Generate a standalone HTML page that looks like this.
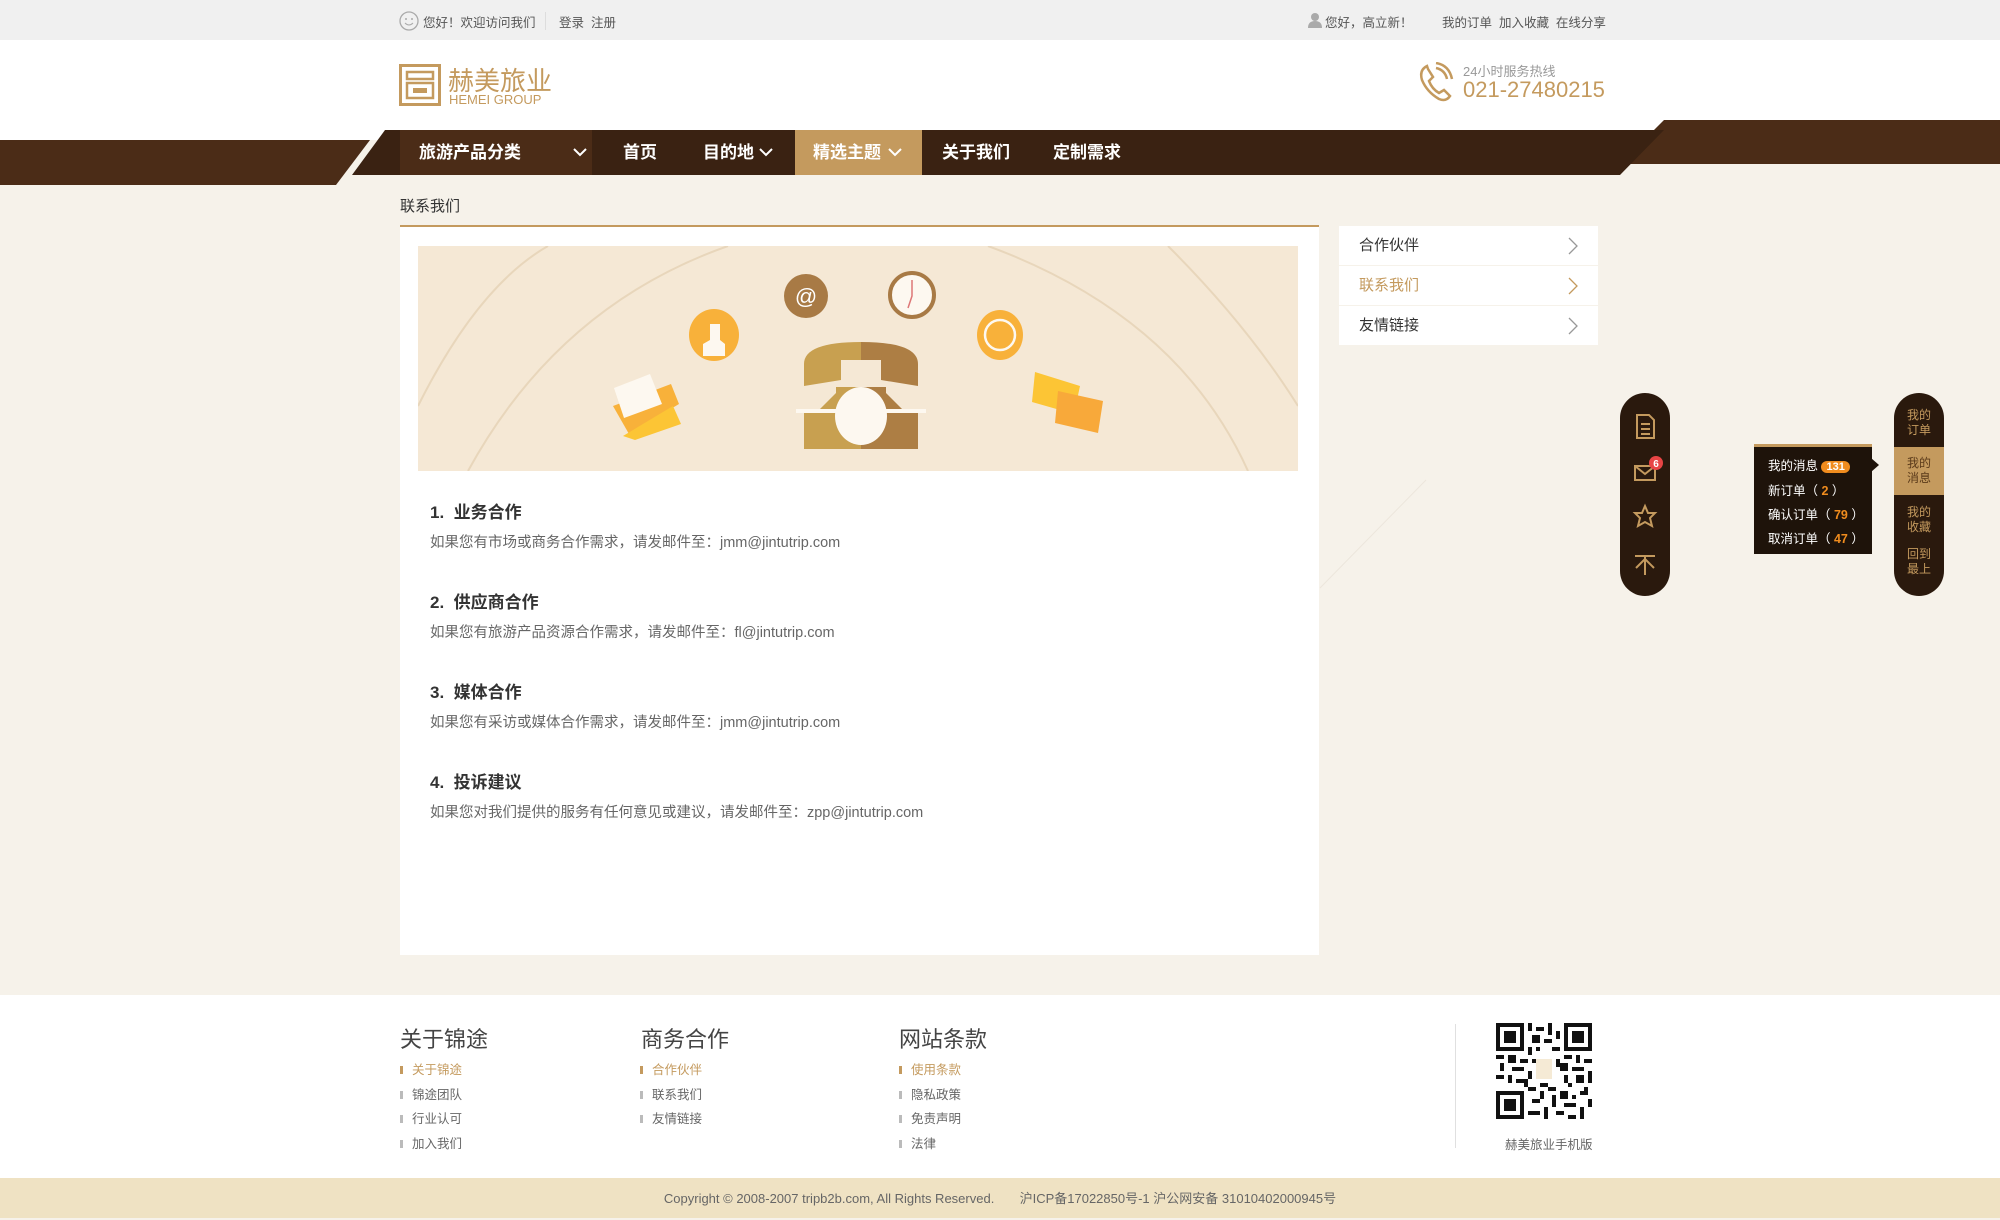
<!DOCTYPE html>
<html><head><meta charset="utf-8"><style>
*{margin:0;padding:0;box-sizing:border-box}
body{width:2000px;height:1218px;background:#f6f2ea;font-family:"Liberation Sans","Noto Sans CJK SC",sans-serif;color:#333;position:relative;overflow:hidden}
.abs{position:absolute}
.top{left:0;top:0;width:2000px;height:40px;background:#f0f0f0;font-size:12.5px;color:#555}
.hdr{left:0;top:40px;width:2000px;height:100px;background:#fff}
.nav a{position:absolute;top:0;height:45px;line-height:45px;color:#fff;font-size:17px;font-weight:bold}
.h3{font-size:17px;font-weight:bold;color:#333;left:430px}
.p{font-size:14.5px;color:#666;left:430px}
.side div{position:absolute;left:1339px;width:259px;height:39px;background:#fff;font-size:15px;line-height:39px;padding-left:20px;color:#333}
.fh{font-size:22px;color:#444;top:1022px}
.fl{font-size:12.5px;color:#666;line-height:24.5px;top:1058px}
.fl span{display:block;position:relative;padding-left:12px}
.fl span:before{content:"";position:absolute;left:0;top:8px;width:3px;height:8px;background:#bbb}
.fl span.on{color:#c49a5e}.fl span.on:before{background:#c49a5e}
</style></head><body>
<div class="abs top">
  <svg class="abs" style="left:399px;top:11px" width="20" height="20"><circle cx="10" cy="10" r="9" fill="none" stroke="#aaa" stroke-width="1.3"/><circle cx="7" cy="8" r="1" fill="#aaa"/><circle cx="13" cy="8" r="1" fill="#aaa"/><path d="M6 12q4 4 8 0" fill="none" stroke="#aaa"/></svg>
  <div class="abs" style="left:423px;top:12px">您好！欢迎访问我们</div>
  <div class="abs" style="left:545px;top:12px;width:1px;height:18px;background:#ddd"></div>
  <div class="abs" style="left:559px;top:12px">登录&nbsp; 注册</div>
  <svg class="abs" style="left:1308px;top:12px" width="14" height="16"><circle cx="7" cy="5" r="4" fill="#aaa"/><path d="M0 16q0-7 7-7q7 0 7 7z" fill="#aaa"/></svg>
  <div class="abs" style="left:1325px;top:12px">您好，高立新！</div>
  <div class="abs" style="left:1442px;top:12px">我的订单&nbsp; 加入收藏&nbsp; 在线分享</div>
</div>
<div class="abs hdr"></div>
<svg class="abs" style="left:399px;top:64px" width="42" height="42"><rect x="1.5" y="1.5" width="39" height="39" fill="none" stroke="#c49a5e" stroke-width="3"/><rect x="8" y="8" width="26" height="7" fill="none" stroke="#c49a5e" stroke-width="2.5"/><rect x="8" y="19" width="26" height="15" fill="none" stroke="#c49a5e" stroke-width="2.5"/><rect x="14" y="24" width="14" height="5" fill="#c49a5e"/></svg>
<div class="abs" style="left:448px;top:61px;font-size:26px;color:#c49a5e">赫美旅业</div>
<div class="abs" style="left:449px;top:92px;font-size:13px;color:#c49a5e">HEMEI GROUP</div>
<svg class="abs" style="left:1418px;top:62px" width="36" height="40" viewBox="0 0 36 40"><path d="M9 4q-8 4-5 14q5 12 17 19q7 3 11-3l-6-6-5 3q-7-4-10-12l4-4-5-8z" fill="none" stroke="#c49a5e" stroke-width="2.5"/><path d="M18 6q9 2 11 11M18 1q13 2 16 16" fill="none" stroke="#c49a5e" stroke-width="2.5"/></svg>
<div class="abs" style="left:1463px;top:61px;font-size:13px;color:#999">24小时服务热线</div>
<div class="abs" style="left:1463px;top:77px;font-size:22px;color:#c49a5e">021-27480215</div>
<svg class="abs" style="left:0;top:118px" width="2000" height="68"><polygon points="0,22 370,22 336,67 0,67" fill="#4b2c17"/><polygon points="1664,2 2000,2 2000,46 1620,46" fill="#4b2c17"/><polygon points="385,12 1664,12 1620,57 385,57" fill="#3a2212"/><polygon points="385,12 400,12 400,57 352,57" fill="#3a2212"/></svg>
<div class="abs nav" style="left:0;top:130px;width:2000px;height:45px">
  <div class="abs" style="left:400px;top:0;width:192px;height:45px;background:#4b2c17"></div>
  <a style="left:419px">旅游产品分类</a><svg class="abs" style="left:573px;top:18px" width="14" height="9"><path d="M1 1l6 6 6-6" fill="none" stroke="#fff" stroke-width="2"/></svg>
  <a style="left:623px">首页</a>
  <a style="left:703px">目的地</a><svg class="abs" style="left:759px;top:18px" width="14" height="9"><path d="M1 1l6 6 6-6" fill="none" stroke="#fff" stroke-width="2"/></svg>
  <div class="abs" style="left:795px;top:0;width:127px;height:45px;background:#c49a5e"></div>
  <a style="left:813px">精选主题</a><svg class="abs" style="left:888px;top:18px" width="14" height="9"><path d="M1 1l6 6 6-6" fill="none" stroke="#fff" stroke-width="2"/></svg>
  <a style="left:942px">关于我们</a>
  <a style="left:1053px">定制需求</a>
</div>
<div class="abs" style="left:400px;top:195px;font-size:15px;color:#333">联系我们</div>
<div class="abs" style="left:400px;top:225px;width:919px;height:730px;background:#fff;border-top:2px solid #c49a5e"></div>
<svg class="abs" style="left:418px;top:246px" width="880" height="225" viewBox="0 0 880 225">
 <rect width="880" height="225" fill="#f5e8d5"/>
 <g fill="none" stroke="#e8d6bb" stroke-width="2"><path d="M0 160Q60 40 130 0M50 225Q140 60 310 0M750 0Q830 80 880 160M570 0Q760 70 830 225"/></g>
 <circle cx="388" cy="50" r="22" fill="#a87a45"/><text x="388" y="58" font-size="22" fill="#fff" text-anchor="middle" font-family="Liberation Sans">@</text>
 <circle cx="494" cy="49" r="22" fill="#fdf8f0" stroke="#a87a45" stroke-width="4"/><path d="M494 34v16l-4 12" stroke="#d77" stroke-width="1.5" fill="none"/>
 <ellipse cx="296" cy="89" rx="25" ry="26" fill="#f8b13a"/><path d="M285 110h22v-12l-5-4v-16h-10v16l-7 4z" fill="#fdf8f0"/>
 <ellipse cx="582" cy="89" rx="23" ry="25" fill="#f8b13a"/><circle cx="582" cy="89" r="15" fill="none" stroke="#fdf8f0" stroke-width="2.5"/>
 <path d="M386 140v-22q0-22 57-22v18h-20v20z" fill="#c8a050"/><path d="M500 140v-22q0-22-57-22v18h20v20z" fill="#ad7e44"/>
 <path d="M398 167l20-20v-6h25v26z" fill="#c8a050"/><path d="M488 167l-20-20v-6h-25v26z" fill="#ad7e44"/>
 <rect x="386" y="165" width="57" height="38" fill="#c8a050"/><rect x="443" y="165" width="57" height="38" fill="#ad7e44"/>
 <rect x="378" y="163" width="130" height="4" fill="#fdf8f0"/>
 <ellipse cx="443" cy="170" rx="26" ry="29" fill="#fdf8f0"/>
 <path d="M195 160l58-22 8 20-50 30z" fill="#f8b13a"/><path d="M196 142l36-14 12 30-38 14z" fill="#fdf8f0"/><path d="M205 190l50-30 8 18-46 16z" fill="#fcc535"/>
 <path d="M617 126l45 14-6 28-42-12z" fill="#fcc535"/><path d="M640 145l45 10-5 32-43-10z" fill="#f8a93a"/>
</svg>
<div class="abs h3" style="top:498px">1.&nbsp; 业务合作</div>
<div class="abs p" style="top:531px">如果您有市场或商务合作需求，请发邮件至：jmm@jintutrip.com</div>
<div class="abs h3" style="top:588px">2.&nbsp; 供应商合作</div>
<div class="abs p" style="top:621px">如果您有旅游产品资源合作需求，请发邮件至：fl@jintutrip.com</div>
<div class="abs h3" style="top:678px">3.&nbsp; 媒体合作</div>
<div class="abs p" style="top:711px">如果您有采访或媒体合作需求，请发邮件至：jmm@jintutrip.com</div>
<div class="abs h3" style="top:768px">4.&nbsp; 投诉建议</div>
<div class="abs p" style="top:801px">如果您对我们提供的服务有任何意见或建议，请发邮件至：zpp@jintutrip.com</div>
<div class="side">
 <div style="top:226px">合作伙伴</div><div style="top:266px;color:#c49a5e">联系我们</div><div style="top:306px">友情链接</div>
</div>
<svg class="abs" style="left:1564px;top:232px" width="20" height="120" fill="none" stroke="#999" stroke-width="1.3"><path d="M5 6l8 8-8 8"/><path d="M5 46l8 8-8 8" stroke="#c49a5e"/><path d="M5 86l8 8-8 8"/></svg>
<svg class="abs" style="left:1318px;top:470px" width="110" height="120"><path d="M2 118L108 10" stroke="#ece6dc" stroke-width="1"/></svg>
<div class="abs" style="left:1620px;top:393px;width:50px;height:203px;background:#2a190d;border-radius:25px"></div>
<svg class="abs" style="left:1620px;top:393px" width="60" height="203" fill="none" stroke="#c49a5e" stroke-width="2"><path d="M17 22h12l5 5v18h-17z M21 31h9M21 36h9M21 41h9"/><rect x="15" y="73" width="20" height="14"/><path d="M15 73l10 8 10-8"/><circle cx="36" cy="70" r="7" fill="#e84545" stroke="none"/><text x="36" y="74" font-size="10" fill="#fff" stroke="none" text-anchor="middle" font-weight="bold">6</text><path d="M25 113l3 7h7l-5 5 2 8-7-4-7 4 2-8-5-5h7z"/><path d="M15 163h20M25 163v19M25 166l-9 9M25 166l9 9"/></svg>
<div class="abs" style="left:1894px;top:393px;width:50px;height:203px;background:#2a190d;border-radius:25px;overflow:hidden;color:#c49a5e;font-size:12px;line-height:15px;text-align:center">
 <div style="padding-top:15px;height:54px">我的<br>订单</div>
 <div style="background:#c49a5e;color:#5a3a1a;height:48px;padding-top:9px">我的<br>消息</div>
 <div style="padding-top:10px;height:48px">我的<br>收藏</div>
 <div style="padding-top:4px">回到<br>最上</div>
</div>
<div class="abs" style="left:1754px;top:444px;width:118px;height:110px;background:#1e130a;border-top:3px solid #c49a5e;color:#fff;font-size:12.5px;line-height:24px;padding:7px 0 0 14px">
 我的消息 <span style="background:#f08c1e;border-radius:8px;padding:0 5px;font-weight:bold;font-size:11px">131</span><br>新订单（ <b style="color:#f08c1e">2</b> ）<br>确认订单（ <b style="color:#f08c1e">79</b> ）<br>取消订单（ <b style="color:#f08c1e">47</b> ）
</div>
<svg class="abs" style="left:1871px;top:458px" width="10" height="14"><path d="M0 0l8 7-8 7z" fill="#1e130a"/></svg>
<div class="abs" style="left:0;top:995px;width:2000px;height:183px;background:#fff"></div>
<div class="abs fh" style="left:400px">关于锦途</div><div class="abs fh" style="left:641px">商务合作</div><div class="abs fh" style="left:899px">网站条款</div>
<div class="abs fl" style="left:400px"><span class="on">关于锦途</span><span>锦途团队</span><span>行业认可</span><span>加入我们</span></div>
<div class="abs fl" style="left:640px"><span class="on">合作伙伴</span><span>联系我们</span><span>友情链接</span></div>
<div class="abs fl" style="left:899px"><span class="on">使用条款</span><span>隐私政策</span><span>免责声明</span><span>法律</span></div>
<div class="abs" style="left:1455px;top:1024px;width:1px;height:124px;background:#e0e0e0"></div>
<svg class="abs" style="left:1496px;top:1023px" width="96" height="96" viewBox="0 0 24 24" shape-rendering="crispEdges">
 <rect width="24" height="24" fill="#fff"/>
 <g fill="#111"><path d="M0 0h7v7h-7zM17 0h7v7h-7zM0 17h7v7h-7z"/></g>
 <g fill="#fff"><path d="M1 1h5v5h-5zM18 1h5v5h-5zM1 18h5v5h-5z"/></g>
 <g fill="#111"><path d="M2 2h3v3h-3zM19 2h3v3h-3zM2 19h3v3h-3z"/>
 <path d="M8 0h1v2h-1zM10 1h2v1h-2zM13 0h1v3h-1zM15 2h1v2h-1zM9 3h2v2h-2zM12 4h2v1h-2zM8 6h1v2h-1zM10 6h1v1h-1zM14 6h2v1h-2zM0 8h2v1h-2zM3 8h2v2h-2zM6 9h2v1h-2zM1 10h1v2h-1zM4 11h3v1h-3zM0 13h2v1h-2zM3 13h1v2h-1zM5 14h3v1h-3zM17 8h2v1h-2zM20 8h1v2h-1zM22 9h2v1h-2zM16 10h2v2h-2zM19 11h3v1h-3zM17 13h1v2h-1zM20 13h2v2h-2zM23 12h1v3h-1zM8 16h2v1h-2zM11 17h1v2h-1zM13 16h2v1h-2zM9 19h2v1h-2zM14 18h1v3h-1zM16 17h2v2h-2zM19 18h1v1h-1zM21 17h2v1h-2zM17 20h3v1h-3zM21 21h1v3h-1zM8 22h3v1h-3zM12 21h1v3h-1zM15 22h2v1h-2zM18 23h2v1h-2zM23 19h1v2h-1zM8 12h1v2h-1zM15 9h1v2h-1zM9 9h1v1h-1zM11 15h2v1h-2zM7 15h1v1h-1zM18 15h1v1h-1zM22 16h1v1h-1z"/></g>
 <rect x="10" y="9" width="4" height="5" fill="#f5ead5"/>
</svg>
<div class="abs" style="left:1505px;top:1134px;font-size:12.5px;color:#666">赫美旅业手机版</div>
<div class="abs" style="left:0;top:1178px;width:2000px;height:40px;background:#efe2c3;font-size:13px;color:#666;text-align:center;line-height:42px">Copyright © 2008-2007 tripb2b.com, All Rights Reserved. &nbsp;&nbsp;&nbsp;&nbsp;&nbsp; 沪ICP备17022850号-1 沪公网安备 31010402000945号</div>
</body></html>
